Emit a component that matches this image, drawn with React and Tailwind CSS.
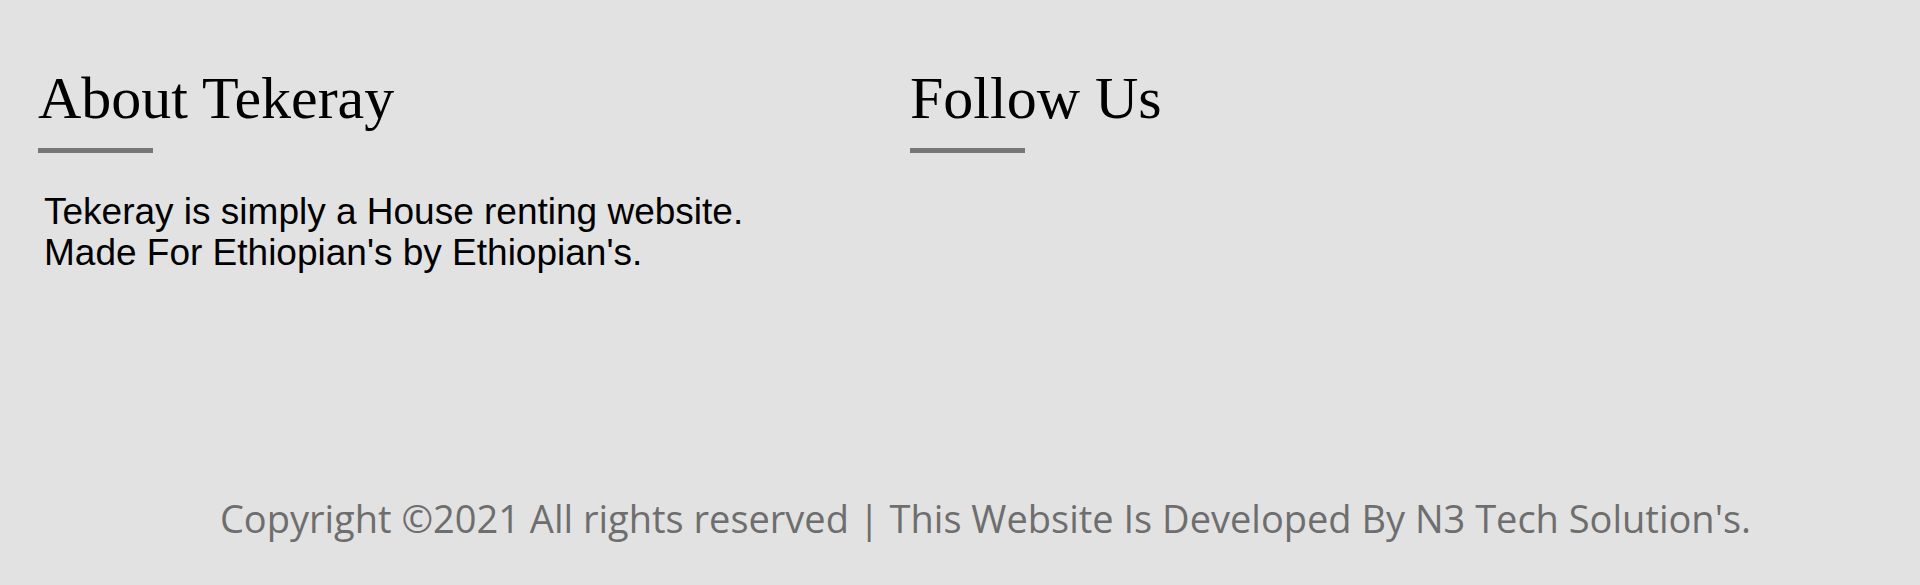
export default function App() {
  return (
    <div className="flex h-[585px] flex-col bg-[#e2e2e2]">
      <div className="flex pl-[38px] pt-[64px]">
        <div className="w-[872px]">
          <h2 className="text-[60px] leading-[69px] text-black" style={{ fontFamily: '"Liberation Serif", serif' }}>
            About Tekeray
          </h2>
          <div className="mt-[15px] h-[5px] w-[115px] bg-[#777777]" />
          <p className="mt-[38px] pl-[6px] text-[37px] leading-[41px] text-black" style={{ fontFamily: '"Liberation Sans", Arial, sans-serif' }}>
            Tekeray is simply a House renting website.
            <br />
            Made For Ethiopian's by Ethiopian's.
          </p>
        </div>
        <div>
          <h2 className="text-[60px] leading-[69px] text-black" style={{ fontFamily: '"Liberation Serif", serif' }}>
            Follow Us
          </h2>
          <div className="mt-[15px] h-[5px] w-[115px] bg-[#777777]" />
        </div>
      </div>
      <div className="mt-auto pb-[41px] pl-[51px] text-center">
        <p className="text-[38px] leading-[52px] text-[#6e6e6e]" style={{ fontFamily: '"Open Sans", sans-serif' }}>
          Copyright ©2021 All rights reserved | This Website Is Developed By N3 Tech Solution's.
        </p>
      </div>
    </div>
  );
}
